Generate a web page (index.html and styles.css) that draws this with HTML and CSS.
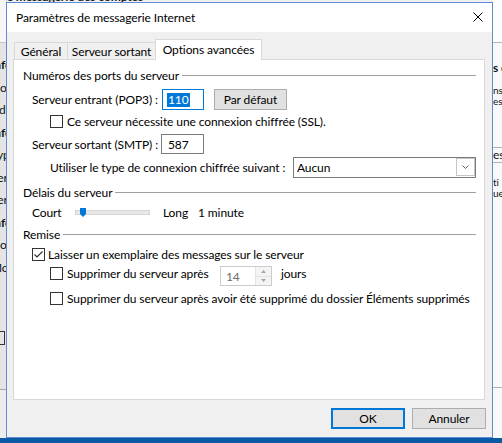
FILE: index.html
```html
<!DOCTYPE html>
<html lang="fr">
<head>
<meta charset="utf-8">
<title>Paramètres de messagerie Internet</title>
<link rel="stylesheet" href="styles.css">
</head>
<body>
<div class="desktop">
  <!-- windows behind the dialog -->
  <div class="backwin backwin-top">de messagerie des comptes</div>
  <div class="backwin backwin-left">
    <ul class="frag-list">
      <li class="b">Info</li>
      <li>Dot</li>
      <li>Adr</li>
      <li class="b">Info</li>
      <li>Typ</li>
      <li>Ser</li>
      <li>Ser</li>
      <li class="b">Info</li>
      <li>Nor</li>
      <li>Mo</li>
    </ul>
    <div class="frag-box"></div>
  </div>
  <div class="backwin backwin-right">
    <div class="rw-head"></div>
    <p class="rw-line rw-bold">s c</p>
    <p class="rw-line rw-small rw-gap1">ns</p>
    <p class="rw-line rw-small">es</p>
    <div class="rw-rule rw-gap2"></div>
    <p class="rw-line rw-mid">es</p>
    <div class="rw-rule"></div>
    <p class="rw-line rw-small rw-gap3">ti</p>
    <p class="rw-line rw-small">ue</p>
    <div class="rw-rule rw-gap4"></div>
  </div>
  <div class="taskbar"></div>

  <section class="dialog">
    <header class="titlebar">
      <span class="title">Paramètres de messagerie Internet</span>
      <svg class="close" width="10" height="10" viewBox="0 0 10 10" aria-label="Fermer">
        <path d="M0.5 0.5 L9.5 9.5 M9.5 0.5 L0.5 9.5" stroke="#000" stroke-width="1" fill="none"/>
      </svg>
    </header>

    <div class="dlg-body">
      <nav class="tabs">
        <div class="tab tab-general">Général</div>
        <div class="tab tab-outgoing">Serveur sortant</div>
        <div class="tab tab-advanced active">Options avancées</div>
      </nav>

      <div class="panel">
        <div class="group-title">Numéros des ports du serveur</div>

        <div class="row row-pop">
          <span class="lbl lbl-pop">Serveur entrant (POP3) :</span>
          <div class="textbox textbox-focus"><span class="sel">110</span></div>
          <button class="btn btn-default">Par défaut</button>
        </div>

        <label class="row row-ssl">
          <span class="check"></span>
          <span>Ce serveur nécessite une connexion chiffrée (SSL).</span>
        </label>

        <div class="row row-smtp">
          <span class="lbl lbl-smtp">Serveur sortant (SMTP) :</span>
          <div class="textbox textbox-smtp">587</div>
        </div>

        <div class="row row-enc">
          <span class="lbl lbl-enc">Utiliser le type de connexion chiffrée suivant :</span>
          <div class="combo">
            <span class="combo-text">Aucun</span>
            <span class="combo-arrow">
              <svg width="7" height="4" viewBox="0 0 7 4"><path d="M0.5 0.5 L3.5 3.5 L6.5 0.5" stroke="#606060" fill="none"/></svg>
            </span>
          </div>
        </div>

        <div class="group-title gt-timeout">Délais du serveur</div>

        <div class="row row-slider">
          <span class="lbl lbl-court">Court</span>
          <div class="track">
            <svg class="thumb" width="6" height="9" viewBox="0 0 6 9"><path d="M0 0 H6 V6 L3 9 L0 6 Z" fill="#0078d7"/></svg>
          </div>
          <span class="lbl lbl-long">Long</span>
          <span>1 minute</span>
        </div>

        <div class="group-title gt-delivery">Remise</div>

        <label class="row row-keep">
          <span class="check checked">
            <svg width="11" height="11" viewBox="0 0 11 11"><path d="M1.5 5.5 L4 8 L9.5 2.5" stroke="#333" stroke-width="1.2" fill="none"/></svg>
          </span>
          <span>Laisser un exemplaire des messages sur le serveur</span>
        </label>

        <div class="row row-remove">
          <label class="check-label">
            <span class="check"></span>
            <span>Supprimer du serveur après</span>
          </label>
          <div class="spin">
            <span class="spin-text">14</span>
            <span class="spin-btns">
              <span class="spin-btn"><svg width="5" height="3" viewBox="0 0 5 3"><path d="M2.5 0 L5 3 H0 Z" fill="#a6a6a6"/></svg></span>
              <span class="spin-btn"><svg width="5" height="3" viewBox="0 0 5 3"><path d="M0 0 H5 L2.5 3 Z" fill="#a6a6a6"/></svg></span>
            </span>
          </div>
          <span class="lbl-days">jours</span>
        </div>

        <label class="row row-deleted">
          <span class="check"></span>
          <span>Supprimer du serveur après avoir été supprimé du dossier Éléments supprimés</span>
        </label>
      </div>

      <div class="actions">
        <button class="btn btn-ok">OK</button>
        <button class="btn btn-cancel">Annuler</button>
      </div>
    </div>
  </section>
</div>
</body>
</html>
```

FILE: styles.css
```css
* { box-sizing: border-box; }

html, body {
  margin: 0;
  padding: 0;
}

body {
  font-family: Lato, "Noto Sans", sans-serif;
  font-size: 12px;
  letter-spacing: -0.1px;
  color: #000;
}

.desktop {
  position: relative;
  width: 502px;
  height: 443px;
  overflow: hidden;
  background: #f0f0f0;
}

/* ---- windows behind the dialog ---- */
.backwin { position: absolute; }

.backwin-top {
  left: 0;
  top: -11px;
  white-space: nowrap;
  font-weight: bold;
  color: #222;
}

.backwin-left {
  left: 0;
  top: 0;
  width: 6px;
  height: 438px;
  overflow: hidden;
  background: linear-gradient(#f6f6f6 0 42px, #c8c8c8 42px 43px, #e4e4e4 43px 389px, #a8a8a8 389px 390px, #ececec 390px);
}

.frag-list {
  list-style: none;
  margin: 54px 0 0 -9px;
  padding: 0;
  line-height: 22.5px;
  white-space: nowrap;
  color: #111;
}

.frag-list .b { font-weight: bold; }

.frag-box {
  margin: 52px 0 0 -2px;
  width: 7px;
  height: 14px;
  border: 1px solid #333;
}

.backwin-right {
  left: 493px;
  top: 0;
  width: 9px;
  height: 438px;
  overflow: hidden;
  background: #f9f9f9;
  white-space: nowrap;
  color: #111;
}

.rw-head {
  height: 43px;
  background: #fff;
  border-bottom: 1px solid #b4b4b4;
}

.rw-line {
  margin: 0;
  height: 14px;
  line-height: 14px;
  overflow: hidden;
}

.rw-bold { margin-top: 18px; font-weight: bold; }
.rw-small { height: 11px; line-height: 11px; font-size: 10px; }
.rw-mid { height: 14px; }
.rw-gap1 { margin-top: 10px; }
.rw-gap3 { margin-top: 14px; }

.rw-rule {
  height: 1px;
  background: #b4b4b4;
}

.rw-gap2 { margin-top: 40px; }
.rw-gap4 { margin-top: 188px; }

.taskbar {
  position: absolute;
  left: 0;
  top: 438px;
  width: 502px;
  height: 5px;
  background: #0c5aa6;
}

/* ---- dialog window ---- */
.dialog {
  position: absolute;
  left: 6px;
  top: 2px;
  width: 487px;
  height: 436px;
  border: 1px solid #5b8cd5;
  background: #f0f0f0;
  display: flex;
  flex-direction: column;
}

.titlebar {
  height: 29px;
  flex: none;
  background: #fff;
  display: flex;
  align-items: center;
  padding: 0 9px 1px 9px;
}

.title { flex: 1; }

.close { flex: none; }

.dlg-body {
  flex: 1;
  display: flex;
  flex-direction: column;
  padding: 7px 7px 0 6px;
}

/* ---- tabs ---- */
.tabs {
  display: flex;
  align-items: flex-end;
  height: 20px;
  margin-left: 1px;
  position: relative;
  z-index: 1;
}

.tab {
  height: 17px;
  border: 1px solid #d9d9d9;
  border-bottom: 0;
  background: #f0f0f0;
  display: flex;
  align-items: center;
  justify-content: center;
  white-space: nowrap;
}

.tab-general { width: 54px; }
.tab-outgoing { width: 89px; margin-left: -1px; }

.tab.active {
  width: 107px;
  height: 21px;
  margin-left: -1px;
  margin-bottom: -1px;
  background: #fff;
  padding-bottom: 1px;
}

/* ---- tab page ---- */
.panel {
  flex: 1;
  background: #fff;
  border: 1px solid #d9d9d9;
  padding: 7px 8px 0 9px;
  display: flex;
  flex-direction: column;
}

.group-title {
  height: 16px;
  flex: none;
  display: flex;
  align-items: center;
  gap: 3px;
  white-space: nowrap;
}

.group-title::after {
  content: "";
  flex: 1;
  height: 1px;
  background: #a0a0a0;
}

.gt-timeout,
.gt-delivery { margin-top: 6px; }

.row {
  display: flex;
  align-items: center;
  flex: none;
  white-space: nowrap;
}

.lbl { flex: none; }

.row-pop { height: 21px; margin-top: 6px; padding-left: 9px; }
.lbl-pop { width: 130px; }

.textbox {
  height: 100%;
  display: flex;
  align-items: center;
  background: #fff;
}

.textbox-focus {
  width: 42px;
  border: 1px solid #0078d7;
  padding-left: 4px;
}

.sel {
  display: inline-block;
  height: 14px;
  line-height: 14px;
  padding: 0 1px;
  background: #0078d7;
  color: #fff;
}

.btn {
  font: inherit;
  letter-spacing: inherit;
  color: #000;
  background: #e1e1e1;
  border: 1px solid #adadad;
  padding: 0;
  height: 21px;
  width: 74px;
  margin: 0;
}

.btn-default { width: 73px; margin-left: 10px; }

.row-ssl { height: 15px; margin-top: 4px; padding-left: 27px; gap: 4px; }

.check {
  flex: none;
  width: 13px;
  height: 13px;
  border: 1px solid #333;
  background: #fff;
  display: flex;
  align-items: center;
  justify-content: center;
}

.row-smtp { height: 20px; margin-top: 5px; padding-left: 9px; }
.lbl-smtp { width: 129px; }

.textbox-smtp {
  width: 43px;
  border: 1px solid #7a7a7a;
  padding-left: 6px;
}

.row-enc { height: 21px; margin-top: 3px; padding-left: 27px; }
.lbl-enc { width: 243px; }

.combo {
  width: 184px;
  height: 21px;
  border: 1px solid #7a7a7a;
  background: #fff;
  display: flex;
  align-items: flex-start;
}

.combo-text {
  flex: 1;
  align-self: center;
  padding-left: 3px;
}

.combo-arrow {
  width: 19px;
  height: 18px;
  border: 1px solid #c6c6c6;
  background: #fff;
  display: flex;
  align-items: center;
  justify-content: center;
}

.row-slider { height: 16px; margin-top: 4px; padding-left: 9px; }
.lbl-court { width: 43px; }

.track {
  position: relative;
  width: 75px;
  height: 5px;
  background: #e7e7e7;
  border: 1px solid #d6d6d6;
  margin-right: 13px;
}

.thumb {
  position: absolute;
  left: 4px;
  top: -3px;
}

.lbl-long { width: 35px; }

.row-keep { height: 15px; margin-top: 5px; padding-left: 9px; gap: 3px; }

.row-remove {
  height: 20px;
  margin-top: 4px;
  padding-left: 27px;
  align-items: flex-start;
}

.check-label {
  width: 170px;
  height: 15px;
  display: flex;
  align-items: center;
  gap: 4px;
}

.spin {
  width: 52px;
  height: 20px;
  border: 1px solid #cccccc;
  background: #fff;
  display: flex;
}

.spin-text {
  flex: 1;
  color: #6d6d6d;
  padding-left: 5px;
  align-self: center;
}

.spin-btns {
  width: 16px;
  display: flex;
  flex-direction: column;
  border-left: 1px solid #e3e3e3;
}

.spin-btn {
  flex: 1;
  display: flex;
  align-items: center;
  justify-content: center;
  background: #f4f4f4;
}

.spin-btn + .spin-btn { border-top: 1px solid #e3e3e3; }

.lbl-days {
  height: 15px;
  line-height: 15px;
  margin-left: 9px;
}

.row-deleted { height: 15px; margin-top: 5px; padding-left: 27px; gap: 4px; }

/* ---- dialog buttons ---- */
.actions {
  flex: none;
  display: flex;
  justify-content: flex-end;
  gap: 7px;
  padding: 8px 0 8px 0;
  margin-right: -1px;
}

.btn-ok { border: 2px solid #0078d7; }
```
